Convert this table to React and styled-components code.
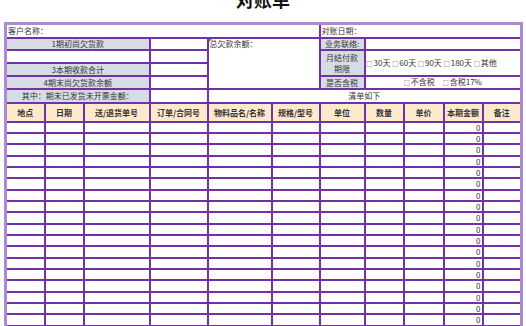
import React from 'react';
import styled, { createGlobalStyle } from 'styled-components';

const GlobalStyle = createGlobalStyle`
  html, body {
    margin: 0;
    padding: 0;
    overflow: hidden;
    background: #ffffff;
  }
  body {
    font-family: "Noto Sans CJK SC", "Liberation Sans", sans-serif;
    color: #333333;
  }
`;

const COLORS = {
  LINE: '#7232a6',
  OUTER: '#ab8ccf',
  LABEL: '#d6dce4',
  HEAD: '#fde9cc',
};

const Page = styled.div`
  padding: 0 4px;
`;

const Title = styled.div`
  margin-top: -10px;
  height: 32px;
  line-height: 18px;
  text-align: center;
  font-size: 18px;
  font-weight: 700;
  color: #111111;
`;

const Sheet = styled.table`
  width: 518px;
  table-layout: fixed;
  border-collapse: collapse;
  border: 3px solid ${COLORS.OUTER};
  font-size: 8px;
`;

const Row = styled.tr`
  height: ${(p) => p.$h}px;
`;

const Cell = styled.td`
  position: relative;
  border: 2px solid ${COLORS.LINE};
  padding: 0 1px;
  line-height: 9px;
  white-space: nowrap;
  overflow: hidden;
  background: ${(p) => p.$bg || '#ffffff'};
  text-align: ${(p) => p.$align || 'left'};
  vertical-align: ${(p) => p.$valign || 'middle'};
  font-weight: ${(p) => (p.$bold ? 700 : 400)};
`;

// two-line label (月结付款 / 期限) needs roomier lines
const TallCell = styled(Cell)`
  line-height: 11px;
`;

// little green marker excel puts on cells with a comment
const NoteCell = styled(Cell)`
  &::before {
    content: '';
    position: absolute;
    left: 0;
    top: 0;
    border-top: 3px solid #3aa339;
    border-right: 3px solid transparent;
  }
`;

const Box = styled.span`
  font-size: 6px;
  margin-right: 1px;
`;

const Gap = styled.span`
  display: inline-block;
  width: ${(p) => p.$w}px;
`;

const COLS = [39, 39, 66, 58, 64, 48, 45, 39, 40, 39, 39];
const HEADERS = ['地点', '日期', '送/退货单号', '订单/合同号', '物料品名/名称', '规格/型号', '单位', '数量', '单价', '本期金额', '备注'];
const TERMS = ['30天', '60天', '90天', '180天', '其他'];

export default function App() {
  const rows = [...Array(19).keys()];
  return (
    <Page>
      <GlobalStyle />
      <Title>对账单</Title>
      <Sheet>
        <colgroup>
          {COLS.map((w, i) => <col key={i} style={{ width: w }} />)}
        </colgroup>
        <tbody>
          <Row $h={14}>
            <Cell colSpan={6}>客户名称：</Cell>
            <Cell colSpan={5}>对账日期：</Cell>
          </Row>
          <Row $h={12}>
            <Cell colSpan={3} $bg={COLORS.LABEL} $align="center">1期初尚欠货款</Cell>
            <Cell />
            <NoteCell colSpan={2} rowSpan={4} $valign="top">总欠款余额：</NoteCell>
            <Cell $bg={COLORS.LABEL} $align="center">业务联络:</Cell>
            <Cell colSpan={4} />
          </Row>
          <Row $h={13}>
            <Cell colSpan={3} />
            <Cell />
            <TallCell rowSpan={2} $bg={COLORS.LABEL} $align="center">
              月结付款<br />期限
            </TallCell>
            <Cell colSpan={4} rowSpan={2}>
              {TERMS.map((t) => (
                <React.Fragment key={t}>
                  <Box>□</Box>{t}{' '}
                </React.Fragment>
              ))}
            </Cell>
          </Row>
          <Row $h={13}>
            <Cell colSpan={3} $bg={COLORS.LABEL} $align="center">3本期收款合计</Cell>
            <Cell />
          </Row>
          <Row $h={13}>
            <Cell colSpan={3} $bg={COLORS.LABEL} $align="center">4期末尚欠货款余额</Cell>
            <Cell />
            <Cell $bg={COLORS.LABEL} $align="center">是否含税</Cell>
            <Cell colSpan={4} $align="center">
              <Box>□</Box>不含税<Gap $w={8} /><Box>□</Box>含税17%
            </Cell>
          </Row>
          <Row $h={14}>
            <Cell colSpan={3} $bg={COLORS.LABEL} $align="center">其中：期末已发货未开票金额：</Cell>
            <Cell />
            <Cell colSpan={7} $align="center">清单如下</Cell>
          </Row>
          <Row $h={19}>
            {HEADERS.map((h) => (
              <Cell key={h} $bg={COLORS.HEAD} $align="center" $bold>{h}</Cell>
            ))}
          </Row>
          {rows.map((i) => (
            // rows of 11/11/12 px keep the 11.3px pitch of the sheet
            <Row key={i} $h={i % 3 === 2 ? 12 : 11}>
              {HEADERS.map((h) => (
                <Cell key={h} $align="right">{h === '本期金额' ? 0 : ''}</Cell>
              ))}
            </Row>
          ))}
        </tbody>
      </Sheet>
    </Page>
  );
}
